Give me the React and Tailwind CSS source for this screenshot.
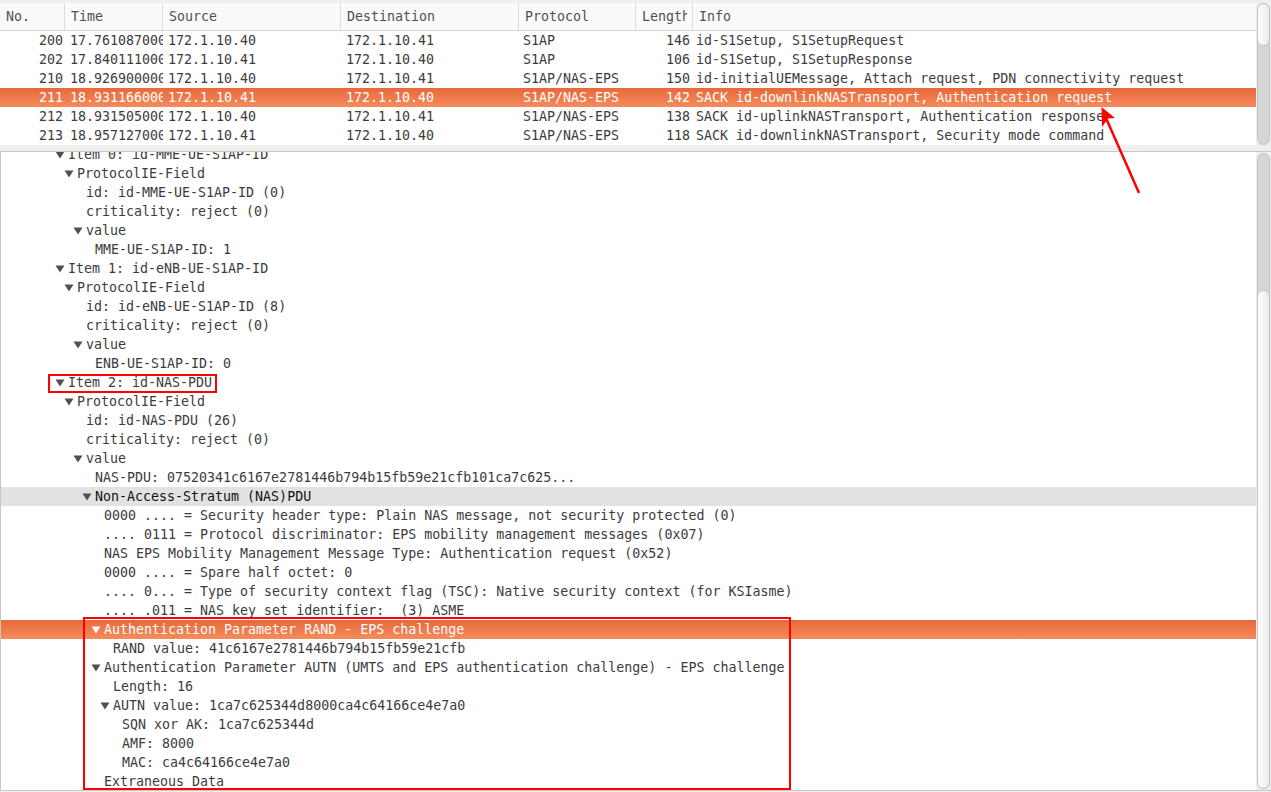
import React from 'react';

const packets = [
  { no: 200, time: '17.761087000', src: '172.1.10.40', dst: '172.1.10.41', proto: 'S1AP', len: 146, info: 'id-S1Setup, S1SetupRequest' },
  { no: 202, time: '17.840111000', src: '172.1.10.41', dst: '172.1.10.40', proto: 'S1AP', len: 106, info: 'id-S1Setup, S1SetupResponse' },
  { no: 210, time: '18.926900000', src: '172.1.10.40', dst: '172.1.10.41', proto: 'S1AP/NAS-EPS', len: 150, info: 'id-initialUEMessage, Attach request, PDN connectivity request' },
  { no: 211, time: '18.931166000', src: '172.1.10.41', dst: '172.1.10.40', proto: 'S1AP/NAS-EPS', len: 142, info: 'SACK id-downlinkNASTransport, Authentication request', selected: true },
  { no: 212, time: '18.931505000', src: '172.1.10.40', dst: '172.1.10.41', proto: 'S1AP/NAS-EPS', len: 138, info: 'SACK id-uplinkNASTransport, Authentication response' },
  { no: 213, time: '18.957127000', src: '172.1.10.41', dst: '172.1.10.40', proto: 'S1AP/NAS-EPS', len: 118, info: 'SACK id-downlinkNASTransport, Security mode command' },
];

// depth -> text indent, open = has expander triangle
const tree = [
  { d: 0, open: true, text: 'Item 0: id-MME-UE-S1AP-ID' },
  { d: 1, open: true, text: 'ProtocolIE-Field' },
  { d: 2, text: 'id: id-MME-UE-S1AP-ID (0)' },
  { d: 2, text: 'criticality: reject (0)' },
  { d: 2, open: true, text: 'value' },
  { d: 3, text: 'MME-UE-S1AP-ID: 1' },
  { d: 0, open: true, text: 'Item 1: id-eNB-UE-S1AP-ID' },
  { d: 1, open: true, text: 'ProtocolIE-Field' },
  { d: 2, text: 'id: id-eNB-UE-S1AP-ID (8)' },
  { d: 2, text: 'criticality: reject (0)' },
  { d: 2, open: true, text: 'value' },
  { d: 3, text: 'ENB-UE-S1AP-ID: 0' },
  { d: 0, open: true, text: 'Item 2: id-NAS-PDU' },
  { d: 1, open: true, text: 'ProtocolIE-Field' },
  { d: 2, text: 'id: id-NAS-PDU (26)' },
  { d: 2, text: 'criticality: reject (0)' },
  { d: 2, open: true, text: 'value' },
  { d: 3, text: 'NAS-PDU: 07520341c6167e2781446b794b15fb59e21cfb101ca7c625...' },
  { d: 3, open: true, text: 'Non-Access-Stratum (NAS)PDU', hover: true },
  { d: 4, text: '0000 .... = Security header type: Plain NAS message, not security protected (0)' },
  { d: 4, text: '.... 0111 = Protocol discriminator: EPS mobility management messages (0x07)' },
  { d: 4, text: 'NAS EPS Mobility Management Message Type: Authentication request (0x52)' },
  { d: 4, text: '0000 .... = Spare half octet: 0' },
  { d: 4, text: '.... 0... = Type of security context flag (TSC): Native security context (for KSIasme)' },
  { d: 4, text: '.... .011 = NAS key set identifier:  (3) ASME' },
  { d: 4, open: true, text: 'Authentication Parameter RAND - EPS challenge', selected: true },
  { d: 5, text: 'RAND value: 41c6167e2781446b794b15fb59e21cfb' },
  { d: 4, open: true, text: 'Authentication Parameter AUTN (UMTS and EPS authentication challenge) - EPS challenge' },
  { d: 5, text: 'Length: 16' },
  { d: 5, open: true, text: 'AUTN value: 1ca7c625344d8000ca4c64166ce4e7a0' },
  { d: 6, text: 'SQN xor AK: 1ca7c625344d' },
  { d: 6, text: 'AMF: 8000' },
  { d: 6, text: 'MAC: ca4c64166ce4e7a0' },
  { d: 4, text: 'Extraneous Data' },
];

const indents = ['pl-[67px]', 'pl-[76px]', 'pl-[85px]', 'pl-[94px]', 'pl-[103px]', 'pl-[112px]', 'pl-[121px]'];

const mono = { fontFamily: '"DejaVu Sans Mono", "Liberation Mono", monospace' };

const Triangle = ({ white }) => (
  <svg width="10" height="8" viewBox="0 0 10 8" className="absolute -left-[13px] top-[6px]">
    <path d="M0.5 0.5 L9.5 0.5 L5 7.5 Z" fill={white ? '#ffffff' : '#505050'} />
  </svg>
);

const Header = ({ w, children }) => (
  <div className={`${w} shrink-0 h-full flex items-center pl-[6px] border-r border-[#dcdcda] text-[#505050] overflow-hidden whitespace-nowrap`}>
    {children}
  </div>
);

export default function App() {
  return (
    <div className="relative w-[1271px] h-[792px] bg-[#f0efed] overflow-hidden text-[13.3px] select-none" style={mono}>
      {/* packet list */}
      <div className="flex pt-[3px] h-[145px]">
        <div className="w-[1256px] bg-white flex flex-col">
          <div className="flex h-[28px] bg-[#fafafa] border-b border-[#d6d6d4]">
            <Header w="w-[65px]">No.</Header>
            <Header w="w-[98px]">Time</Header>
            <Header w="w-[178px]">Source</Header>
            <Header w="w-[178px]">Destination</Header>
            <Header w="w-[117px]">Protocol</Header>
            <Header w="w-[57px]">
              <span className="block w-[45px] shrink-0 overflow-hidden">Length</span>
            </Header>
            <div className="flex-1 h-full flex items-center px-[6px] text-[#505050]">Info</div>
          </div>
          {packets.map((p) => (
            <div
              key={p.no}
              className={`flex h-[19px] leading-[19px] whitespace-nowrap ${
                p.selected ? 'bg-gradient-to-b from-[#e8683a] to-[#f58b5c] text-white' : 'text-[#3c3c3c]'
              }`}
            >
              <div className="w-[65px] text-right pr-[2px] overflow-hidden">{p.no}</div>
              <div className="w-[98px] pl-[5px] overflow-hidden">{p.time}</div>
              <div className="w-[178px] pl-[5px] overflow-hidden">{p.src}</div>
              <div className="w-[178px] pl-[5px] overflow-hidden">{p.dst}</div>
              <div className="w-[116px] pl-[4px] overflow-hidden">{p.proto}</div>
              <div className="w-[57px] text-right pr-[2px] overflow-hidden">{p.len}</div>
              <div className="flex-1 pl-[4px] overflow-hidden">{p.info}</div>
            </div>
          ))}
        </div>
        <div className="w-[15px] relative">
          <div className="absolute left-[1px] right-[1px] top-0 bottom-0 rounded-full bg-[#d6d6d6] border border-[#c4c4c4]" />
          <div className="absolute left-[1px] right-[1px] top-0 h-[43px] rounded-full bg-gradient-to-r from-[#fdfdfd] to-[#ececec] border border-[#c4c4c4]" />
        </div>
      </div>

      {/* splitter */}
      <div className="h-[7px] border-b border-[#c8c7c4]" />

      {/* packet details */}
      <div className="flex h-[639px] border-b border-[#c8c7c4]">
        <div className="w-[1256px] bg-white border-l border-[#c8c7c4] overflow-hidden">
          <div className="-mt-[7px]">
            {tree.map((n, i) => (
              <div
                key={i}
                className={`h-[19px] leading-[19px] whitespace-pre ${
                  n.selected
                    ? 'bg-gradient-to-b from-[#e8683a] to-[#f58b5c] text-white'
                    : n.hover
                    ? 'bg-[#e2e2e2] text-[#111111]'
                    : 'text-[#3c3c3c]'
                } ${indents[n.d]}`}
              >
                <span className="relative inline-block h-[19px]">
                  {n.open && <Triangle white={n.selected} />}
                  {n.text}
                </span>
              </div>
            ))}
          </div>
        </div>
        <div className="w-[15px] relative">
          <div className="absolute left-[1px] right-[1px] top-[1px] bottom-[1px] rounded-full bg-[#d6d6d6] border border-[#c4c4c4]" />
          <div className="absolute left-[1px] right-[1px] top-[138px] bottom-[1px] rounded-full bg-gradient-to-r from-[#fdfdfd] to-[#ececec] border border-[#c4c4c4]" />
        </div>
      </div>

      {/* annotations */}
      <div className="absolute left-[48px] top-[374px] w-[169px] h-[19px] border-2 border-[#ff0000]" />
      <div className="absolute left-[83px] top-[617px] w-[708px] h-[173px] border-2 border-[#ff0000]" />
      <svg className="absolute left-0 top-0 pointer-events-none" width="1271" height="792">
        <line x1="1139" y1="193" x2="1106" y2="118" stroke="#ff0000" strokeWidth="2.5" />
        <path d="M1101.5 107 L1115 118 L1108 118.5 L1102 127 Z" fill="#ff0000" />
      </svg>
    </div>
  );
}
